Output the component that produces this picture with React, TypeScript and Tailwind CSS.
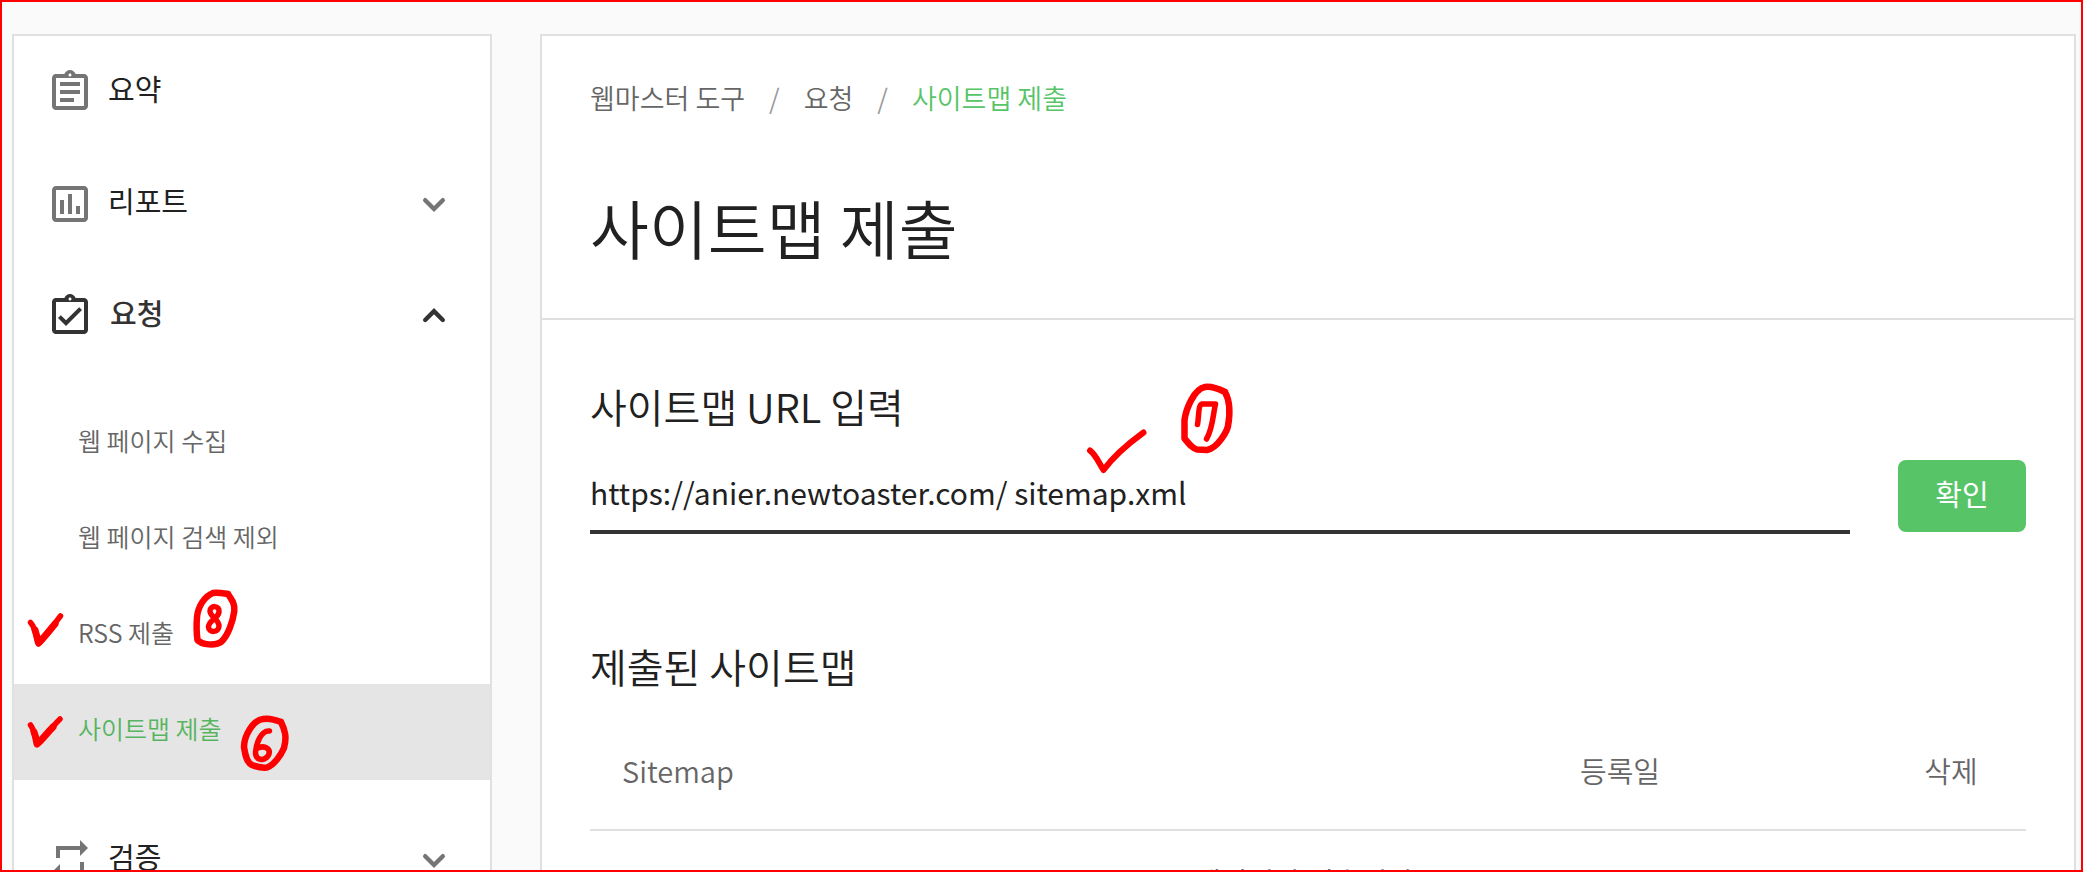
import { useState } from "react";
import {
  MdOutlineAssessment,
  MdOutlineAssignment,
  MdOutlineAssignmentTurnedIn,
  MdRepeat,
} from "react-icons/md";

const requestMenu = [
  { title: "웹 페이지 수집" },
  { title: "웹 페이지 검색 제외" },
  { title: "RSS 제출" },
  { title: "사이트맵 제출", active: true },
];

const Chevron = ({ up }: { up?: boolean }) => (
  <svg
    viewBox="0 0 48 48"
    className="w-12 h-12 ml-auto"
    fill="none"
    stroke="currentColor"
    strokeWidth="4.4"
    strokeLinecap="round"
  >
    <path d={up ? "M15.2 28l8.8-8.8 8.8 8.8" : "M15.2 20.2l8.8 8.8 8.8-8.8"} />
  </svg>
);

const Sidebar = () => {
  return (
    <nav className="w-[480px] shrink-0 bg-white border-2 border-b-0 border-[#e0e0e0] text-[29px] leading-[40px] text-[#212121]">
      <a href="#summary" className="flex items-center h-28 px-8 gap-3.5">
        <MdOutlineAssignment className="w-12 h-12 text-[#757575]" />
        <span className="pb-2">요약</span>
      </a>
      <button type="button" className="flex items-center w-full h-28 px-8 gap-3.5">
        <MdOutlineAssessment className="w-12 h-12 text-[#757575]" />
        <span className="pb-2">리포트</span>
        <span className="ml-auto text-[#757575]">
          <Chevron />
        </span>
      </button>
      <button
        type="button"
        className="flex items-center w-full h-28 px-8 gap-4 font-medium text-[#333]"
      >
        <MdOutlineAssignmentTurnedIn className="w-12 h-12" />
        <span className="pb-2">요청</span>
        <Chevron up />
      </button>
      <ul className="py-6 text-[25px] font-[350] text-[#666]">
        {requestMenu.map((data, index) => (
          <li key={index}>
            <a
              href="#request"
              className={
                data.active
                  ? "flex items-center h-24 pl-16 bg-[#e5e5e5] text-[#57b560]"
                  : "flex items-center h-24 pl-16"
              }
            >
              <span className="pb-2">{data.title}</span>
            </a>
          </li>
        ))}
      </ul>
      <button type="button" className="flex items-center w-full h-28 px-8 gap-3.5">
        <MdRepeat className="w-12 h-12 text-[#757575]" />
        <span className="pb-2">검증</span>
        <span className="ml-auto text-[#757575]">
          <Chevron />
        </span>
      </button>
    </nav>
  );
};

const SitemapTable = () => {
  return (
    <table className="w-full text-[29px] leading-[40px] font-[350] text-[#666]">
      <thead>
        <tr className="h-[116px] border-b-2 border-[#e0e0e0]">
          <th className="pb-1 pl-8 font-[350] text-left">Sitemap</th>
          <th className="pb-1 w-[512px] font-[350]">등록일</th>
          <th className="pb-1 w-[150px] font-[350]">삭제</th>
        </tr>
      </thead>
      <tbody>
        <tr>
          <td colSpan={3} className="pt-[30px] pb-10 text-center">
            데이터가 없습니다.
          </td>
        </tr>
      </tbody>
    </table>
  );
};

// hand-drawn step marks laid over the page
const Marks = () => {
  return (
    <svg
      className="absolute -top-0.5 -left-0.5 pointer-events-none"
      width="1280"
      height="800"
      fill="none"
      stroke="#ff0000"
      strokeWidth="5.5"
      strokeLinecap="round"
      strokeLinejoin="round"
    >
      {/* ticks, heavier towards the bottom of the stroke */}
      <path d="M30.500 622.500C35 627 37 637 38.500 644C45 637 52 627 60.500 616" />
      <path
        strokeWidth="7"
        d="M35 630C37 636 37.500 640 38.500 643C43 639 49 631 55 624"
      />
      <path d="M30.500 725C35 731 35.500 738 37 744.500C43 739 50 729 60 719" />
      <path
        strokeWidth="7"
        d="M34 732C36 737 36 740 37 744C42 740 48 732 53 727"
      />
      <path
        strokeWidth="6"
        d="M1090 450.500C1096 455 1099 463 1103.500 470C1113 457 1125 446 1143.500 432.500"
      />
      {/* 8 */}
      <path
        strokeWidth="6.5"
        d="M228 594C222 593 217 592 213 593C205 596 198 606 197 617Q196 630 197.500 640C202 645 215 646 221 642C228 636 233 621 234.300 611C235 604 232 600 228 594"
      />
      <path d="M219 612C220 605 210 605 210 611C210 617 219 619 219 626C219 633 208.500 633 208.500 627C208.500 620 218 619 219 612" />
      {/* 6 */}
      <path
        strokeWidth="6.5"
        d="M281 722C276 720 268 718 263 719C253 720 244 736 244 747C245 753 246 762 252 765C257 767 262 768 267 767.500C274 765 281 755 284 748C287 737 285 730 281 722"
      />
      <path d="M269.500 731C261 730 256 744 255.500 752C255.500 761 264 761 268 756C272 749 265 745 258 748" />
      {/* 7 */}
      <path
        strokeWidth="6.5"
        d="M1225 392C1219 389 1211 386 1205 387C1194 389 1186 409 1184.500 420V438.500C1189 444 1193 449 1197 449.500L1207 450C1218 448 1227 431 1228 426C1230 415 1230 401 1225 392"
      />
      <path d="M1197.500 424.500C1199 417 1198 405 1202 404H1215.500C1213 414 1213 428 1206.500 439" />
    </svg>
  );
};

const App = () => {
  const [url, setUrl] = useState("https://anier.newtoaster.com/ sitemap.xml");

  return (
    <div className="relative h-screen overflow-hidden border-2 border-[#ff0000] bg-[#fafafa] font-['Noto_Sans_CJK_KR',sans-serif]">
      <div className="flex gap-12 pt-8 pl-[10px] pr-[5px]">
        <Sidebar />
        <main className="flex-1 min-w-0 bg-white border-2 border-b-0 border-[#e0e0e0]">
          <header className="px-12 pt-[42px] border-b-2 border-[#e0e0e0] h-[284px]">
            <div className="flex gap-6 text-[27px] leading-[40px] font-[350] text-[#666]">
              <a href="#tools">웹마스터 도구</a>
              <span className="text-[#999]">/</span>
              <a href="#request">요청</a>
              <span className="text-[#999]">/</span>
              <a href="#sitemap" className="text-[#57c567]">
                사이트맵 제출
              </a>
            </div>
            <h1 className="mt-[62px] text-[64px] leading-[92px] font-[350] text-[#212121]">
              사이트맵 제출
            </h1>
          </header>
          <div className="px-12 pt-[58px]">
            <label
              htmlFor="sitemap-url"
              className="block text-[40px] leading-[56px] font-[350] text-[#212121]"
            >
              사이트맵 URL 입력
            </label>
            <div className="flex items-center gap-12 mt-6">
              <input
                id="sitemap-url"
                value={url}
                onChange={(e) => setUrl(e.target.value)}
                className="flex-1 h-[76px] min-w-0 pb-1 border-b-4 border-[#333] text-[30px] text-[#212121] outline-none"
              />
              <button
                type="button"
                className="w-32 h-[72px] pb-1 rounded-lg bg-[#57c567] text-[29px] text-white"
              >
                확인
              </button>
            </div>
            <h2 className="mt-[104px] text-[40px] leading-[56px] font-[350] text-[#212121]">
              제출된 사이트맵
            </h2>
            <div className="mt-5">
              <SitemapTable />
            </div>
          </div>
        </main>
      </div>
      <Marks />
    </div>
  );
};

export default App;
